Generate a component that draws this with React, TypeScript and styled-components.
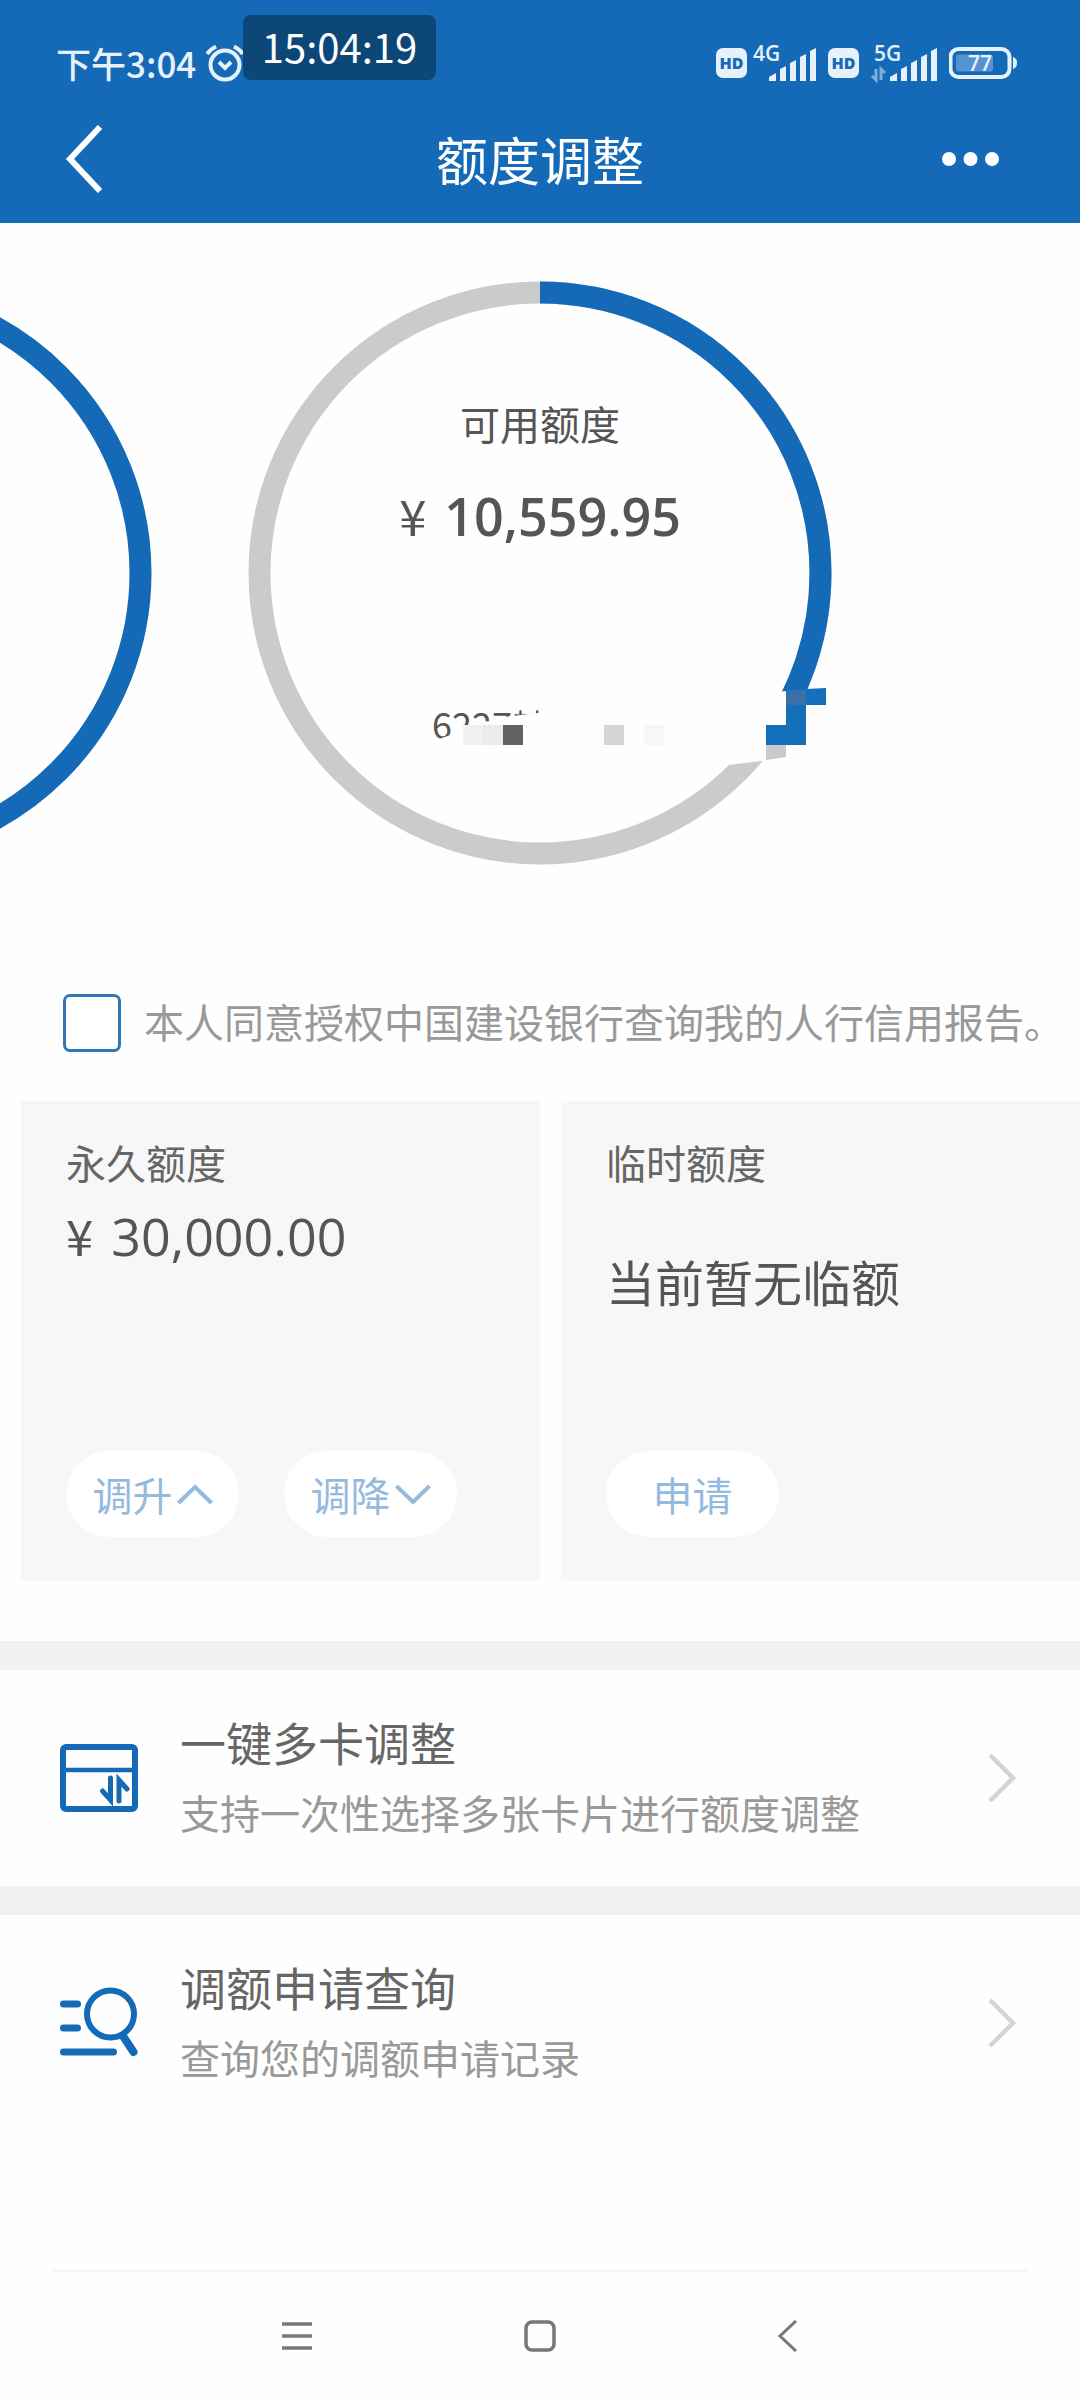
import React from "react";
import styled, { createGlobalStyle } from "styled-components";

const BLUE = "#146ab6";
const CJK = '"Noto Sans CJK SC", sans-serif';
const NUM = '"Open Sans", "Noto Sans CJK SC", sans-serif';

const GlobalStyle = createGlobalStyle`
  *, *::before, *::after { box-sizing: border-box; }
  body { margin: 0; background: #fefefe; font-family: ${CJK}; color: #555; }
  button { font: inherit; border: 0; padding: 0; background: none; cursor: pointer; }
  svg { display: block; flex: none; }
`;

const Page = styled.div`
  min-height: 100vh;
  display: flex;
  flex-direction: column;
  overflow-x: hidden;
`;

const Header = styled.header`
  position: relative;
  background: ${BLUE};
  color: #fff;
`;

const StatusBar = styled.div`
  display: flex;
  align-items: center;
  justify-content: space-between;
  height: 95px;
  padding: 31px 62px 0 56px;
  color: #e6f1fb;
`;

const StatusGroup = styled.div<{ $gap: number }>`
  display: flex;
  align-items: center;
  gap: ${(p) => p.$gap}px;
`;

const StatusTime = styled.span`
  font-size: 35px;
  line-height: 40px;
  font-weight: 500;
`;

const HdBadge = styled.span`
  display: grid;
  place-items: center;
  width: 31px;
  height: 30px;
  border-radius: 7px;
  background: #e6f1fb;
  color: ${BLUE};
  font: 800 16px/20px "Open Sans", sans-serif;
`;

const FloatingClock = styled.div`
  position: absolute;
  left: 243px;
  top: 15px;
  width: 193px;
  height: 65px;
  border-radius: 8px;
  background: #0d4778;
  color: #fff;
  font-size: 40px;
  line-height: 62px;
  text-align: center;
`;

const TitleBar = styled.div`
  display: grid;
  grid-template-columns: 120px 1fr 120px;
  align-items: center;
  height: 128px;
  padding: 0 48px;
`;

const Title = styled.h1`
  margin: 0;
  font-size: 52px;
  line-height: 72px;
  font-weight: 400;
  text-align: center;
`;

const BarButton = styled.button<{ $end?: boolean }>`
  display: flex;
  justify-content: ${(p) => (p.$end ? "flex-end" : "flex-start")};
  padding: 0 16px;
  color: #fff;
`;

const Carousel = styled.section`
  overflow: hidden;
  padding: 58px 0 0;
`;

const Track = styled.div`
  display: flex;
  gap: 96px;
  margin-left: calc(50% - 972px);
`;

const Gauge = styled.div`
  flex: none;
  display: grid;
  width: 584px;
  height: 584px;
  > * { grid-area: 1 / 1; }
`;

const GaugeText = styled.div`
  display: flex;
  flex-direction: column;
  align-items: center;
  gap: 27px;
  padding-top: 112px;
`;

const Label = styled.span`
  font-size: 40px;
  line-height: 60px;
`;

const Amount = styled.span<{ $strong?: boolean }>`
  display: flex;
  align-items: baseline;
  gap: 18px;
  font-family: ${NUM};
  font-size: 52px;
  font-weight: ${(p) => (p.$strong ? 600 : 500)};
  line-height: 70px;
  color: #555;
`;

const Yen = styled.span`
  font-family: ${CJK};
  font-size: 49px;
  font-weight: 400;
`;

const Consent = styled.label`
  display: flex;
  align-items: center;
  gap: 23px;
  height: 60px;
  margin: 128px 0 48px;
  padding-left: 63px;
`;

const ConsentText = styled.span`
  padding-bottom: 4px;
  color: #999;
  font-size: 40px;
  line-height: 60px;
  white-space: nowrap;
`;

const Checkbox = styled.input`
  appearance: none;
  flex: none;
  width: 58px;
  height: 58px;
  margin: 0;
  border: 3px solid #2f78b5;
  border-radius: 7px;
  background: #fff;
  &:checked { background: ${BLUE}; }
`;

const Cards = styled.section`
  display: grid;
  grid-template-columns: 1fr 1fr;
  gap: 21px;
  padding-left: 21px;
  margin-bottom: 60px;
`;

const Card = styled.article`
  display: flex;
  flex-direction: column;
  align-items: flex-start;
  gap: 8px;
  min-height: 480px;
  padding: 31px 45px 44px;
  background: #f7f7f7;
  color: #666;
`;

const CardValue = styled.div`
  padding-top: 46px;
  font-size: 49px;
  line-height: 70px;
  color: #555;
`;

const Actions = styled.div`
  display: flex;
  gap: 45px;
  margin-top: auto;
`;

const Pill = styled.button`
  display: flex;
  align-items: center;
  justify-content: center;
  gap: 4px;
  width: 173px;
  height: 86px;
  border-radius: 43px;
  background: #fff;
  color: #94bbde;
  font-size: 40px;
  line-height: 60px;
`;

const MenuList = styled.nav`
  display: flex;
  flex-direction: column;
`;

const MenuRow = styled.a`
  display: flex;
  align-items: center;
  gap: 42px;
  height: 245px;
  padding: 0 64px 0 60px;
  border-top: 29px solid #f1f1f1;
  color: #666;
  text-decoration: none;
`;

const MenuText = styled.div`
  flex: 1;
  display: flex;
  flex-direction: column;
  gap: 8px;
  padding-bottom: 6px;
`;

const MenuTitle = styled.span`
  font-size: 46px;
  line-height: 66px;
`;

const MenuHint = styled.span`
  color: #999;
  font-size: 40px;
  line-height: 60px;
`;

const SystemNav = styled.footer`
  display: flex;
  justify-content: center;
  height: 130px;
  margin: auto 52px 0;
  border-top: 2px solid #f5f5f5;
`;

const SystemKey = styled.button`
  display: grid;
  place-items: center;
  width: 244px;
  color: #777;
`;

const AlarmIcon = () => (
  <svg width="40" height="40" viewBox="0 0 40 40" fill="none" stroke="currentColor" strokeWidth="4" aria-hidden="true">
    <circle cx="19" cy="22" r="14.500" />
    <path d="M13 19l6 6 6-6" />
    <path d="M1 11C3 8 6 5.500 10 3.500M37 11C35 8 32 5.500 28 3.500" />
  </svg>
);

const Signal = ({ name, active }: { name: string; active?: boolean }) => (
  <svg
    width={active ? 70 : 66}
    height="54"
    viewBox={active ? "-4 -8 70 54" : "0 -8 66 54"}
    fill="currentColor"
    aria-label={name}
  >
    <text x="1" y="17" fontFamily="Open Sans, sans-serif" fontSize="21" fontWeight="600">{name}</text>
    {active && (
      <path d="M3 25v11l-4-4M8 36V25l4 4" fill="none" stroke="currentColor" strokeWidth="3" opacity="0.5" />
    )}
    <path d="M17 37v-4l7-4v8zM28 37V25l6-3v15zM38 37V19l6-3v21zM48 37V13l6-3v27zM58 37V7l6-3v33z" />
  </svg>
);

const BatteryIcon = () => (
  <svg width="69" height="32" viewBox="0 0 69 32" aria-label="77%">
    <rect x="1.500" y="2" width="59" height="28" rx="8" fill="none" stroke="currentColor" strokeWidth="4" />
    <rect x="7" y="7.500" width="37" height="17" rx="3" fill="#5593d0" />
    <path d="M64 10c3 1 4 3 4 6s-1 5-4 6z" fill="currentColor" />
    <text x="31" y="23.500" textAnchor="middle" fontFamily="Open Sans, sans-serif" fontSize="21" fontWeight="600" fill="currentColor">77</text>
  </svg>
);

const Chevron = ({ up }: { up?: boolean }) => (
  <svg width="36" height="24" viewBox="0 0 36 24" fill="none" stroke="currentColor" strokeWidth="4" aria-hidden="true">
    <path d={up ? "M1.500 21L18 5l16.500 16" : "M1.500 4L18 20 34.500 4"} />
  </svg>
);

const RowArrow = () => (
  <svg width="28" height="50" viewBox="0 0 28 50" fill="none" stroke="#d4d4d4" strokeWidth="4.500" aria-hidden="true">
    <path d="M2 2l23 23L2 48" />
  </svg>
);

const CardIcon = () => (
  <svg width="78" height="68" viewBox="0 0 78 68" fill="none" stroke={BLUE} strokeWidth="6" strokeLinecap="round" aria-hidden="true">
    <rect x="3" y="3" width="72" height="62" rx="3" />
    <path d="M3 26h72" strokeWidth="4.500" />
    <path d="M50.500 34v22l-8-9M59 57V36l8 9" strokeWidth="5" />
  </svg>
);

const SearchListIcon = () => (
  <svg width="78" height="76" viewBox="0 0 78 76" fill="none" stroke={BLUE} strokeWidth="7" strokeLinecap="round" aria-hidden="true">
    <path d="M3.500 19h14M3.500 43h14M3.500 67h50" />
    <circle cx="50.500" cy="29" r="23.500" strokeWidth="6" />
    <path d="M63 51l10.500 16" strokeWidth="8" />
  </svg>
);

const FullRing = () => (
  <svg width="584" height="584" viewBox="0 0 584 584" aria-hidden="true">
    <circle cx="292" cy="292" r="280.500" fill="none" stroke={BLUE} strokeWidth="22" />
  </svg>
);

const LimitRing = ({ share }: { share: number }) => {
  const length = 2 * Math.PI * 280.5;
  return (
    <svg width="584" height="584" viewBox="0 0 584 584" aria-hidden="true">
      <g fill="none" strokeWidth="22">
        <circle cx="292" cy="292" r="280.500" stroke="#cbcbcb" />
        <circle
          cx="292"
          cy="292"
          r="280.500"
          stroke={BLUE}
          strokeDasharray={`${length * share} ${length}`}
          transform="rotate(-90 292 292)"
        />
      </g>
      <path d="M525 411l60-4v70l-71 3-51 6-30-1z" fill="#fefefe" />
      <text x="184" y="458" fontFamily="Noto Sans CJK SC, sans-serif" fontSize="36" fill="#555">6227**</text>
      <path d="M180 462l25-9 2-8 14-1 6-3 19-1 2-3 16-2 36-4v60H180z" fill="#fefefe" />
      <path d="M215 444h20v20h-20z" fill="#eef1f0" />
      <path d="M235 444h20v20h-20z" fill="#ebebeb" />
      <path d="M255 444h20v20h-20z" fill="#636363" />
      <path d="M356 444h20v20h-20z" fill="#d6d5d7" />
      <path d="M396 444h20v20h-20z" fill="#f7f7f7" />
      <path d="M558 408l20-1v17h-20v40h-40v-20h20v-34z" fill="#1570bb" />
      <path d="M538 410l20-1v15h-20z" fill="#3a70a8" />
      <path d="M518 464h20v12l-20 3z" fill="#cbc9cb" />
    </svg>
  );
};

const rows = [
  { title: "一键多卡调整", hint: "支持一次性选择多张卡片进行额度调整", icon: <CardIcon /> },
  { title: "调额申请查询", hint: "查询您的调额申请记录", icon: <SearchListIcon /> },
];

export default function App() {
  return (
    <Page>
      <GlobalStyle />
      <Header>
        <StatusBar>
          <StatusGroup $gap={10}>
            <StatusTime>下午3:04</StatusTime>
            <AlarmIcon />
          </StatusGroup>
          <StatusGroup $gap={10}>
            <StatusGroup $gap={5}>
              <HdBadge>HD</HdBadge>
              <Signal name="4G" />
            </StatusGroup>
            <HdBadge>HD</HdBadge>
            <Signal name="5G" active />
            <BatteryIcon />
          </StatusGroup>
        </StatusBar>
        <TitleBar>
          <BarButton aria-label="返回">
            <svg width="40" height="68" viewBox="0 0 40 68" fill="none" stroke="currentColor" strokeWidth="6">
              <path d="M36 2L6 34l30 32" />
            </svg>
          </BarButton>
          <Title>额度调整</Title>
          <BarButton $end aria-label="更多">
            <svg width="76" height="16" viewBox="0 0 76 16" fill="currentColor">
              <circle cx="9" cy="8" r="7" />
              <circle cx="30.500" cy="8" r="7" />
              <circle cx="52" cy="8" r="7" />
            </svg>
          </BarButton>
        </TitleBar>
        <FloatingClock>15:04:19</FloatingClock>
      </Header>

      <Carousel>
        <Track>
          <Gauge>
            <FullRing />
          </Gauge>
          <Gauge>
            <LimitRing share={0.352} />
            <GaugeText>
              <Label>可用额度</Label>
              <Amount $strong>
                <Yen>¥</Yen>10,559.95
              </Amount>
            </GaugeText>
          </Gauge>
        </Track>
      </Carousel>

      <Consent>
        <Checkbox type="checkbox" />
        <ConsentText>本人同意授权中国建设银行查询我的人行信用报告。</ConsentText>
      </Consent>

      <Cards>
        <Card>
          <Label>永久额度</Label>
          <Amount>
            <Yen>¥</Yen>30,000.00
          </Amount>
          <Actions>
            <Pill>
              调升
              <Chevron up />
            </Pill>
            <Pill>
              调降
              <Chevron />
            </Pill>
          </Actions>
        </Card>
        <Card>
          <Label>临时额度</Label>
          <CardValue>当前暂无临额</CardValue>
          <Actions>
            <Pill>申请</Pill>
          </Actions>
        </Card>
      </Cards>

      <MenuList>
        {rows.map((row) => (
          <MenuRow key={row.title} href="#">
            {row.icon}
            <MenuText>
              <MenuTitle>{row.title}</MenuTitle>
              <MenuHint>{row.hint}</MenuHint>
            </MenuText>
            <RowArrow />
          </MenuRow>
        ))}
      </MenuList>

      <SystemNav>
        <SystemKey aria-label="菜单">
          <svg width="32" height="32" viewBox="0 0 32 32" stroke="currentColor" strokeWidth="3.500">
            <path d="M2 4h30M2 16h30M2 28h30" />
          </svg>
        </SystemKey>
        <SystemKey aria-label="主页">
          <svg width="32" height="32" viewBox="0 0 32 32" fill="none" stroke="currentColor" strokeWidth="3.500">
            <rect x="2" y="2" width="28" height="28" rx="6" />
          </svg>
        </SystemKey>
        <SystemKey aria-label="返回">
          <svg width="32" height="32" viewBox="0 0 32 32" fill="none" stroke="currentColor" strokeWidth="3">
            <path d="M28 1L12 16l16 15" />
          </svg>
        </SystemKey>
      </SystemNav>
    </Page>
  );
}
